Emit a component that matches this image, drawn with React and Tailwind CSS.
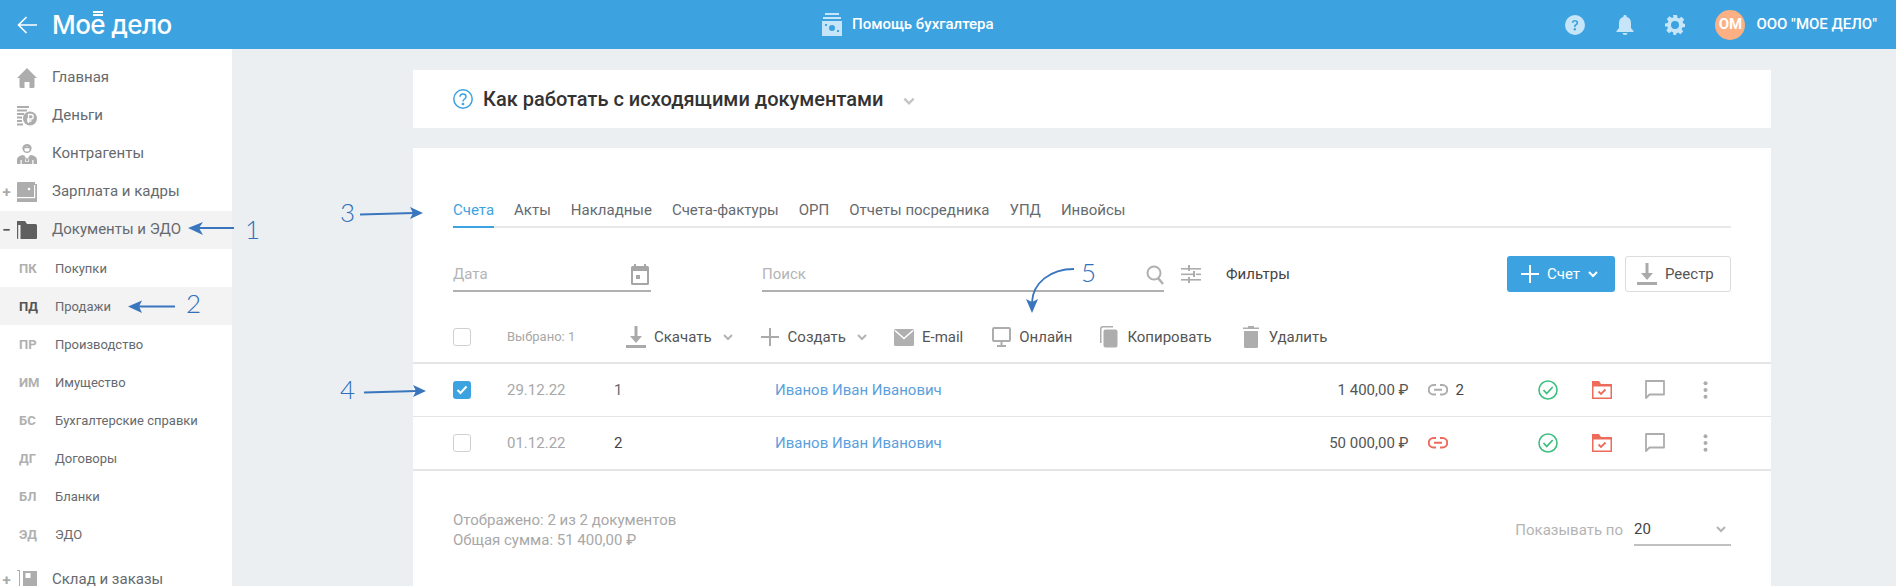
import React from "react";

const F = { fontFamily: "Roboto, 'Liberation Sans', sans-serif" };

const Chevron = ({ c = "#b4b4b4", s = 12 }) => (
  <svg width={s} height={s} viewBox="0 0 12 12" fill="none"><path d="M2 4l4 4 4-4" stroke={c} strokeWidth="2" /></svg>
);
const Plus = ({ c = "#aaa" }) => (
  <svg width="20" height="20" viewBox="0 0 20 20"><path d="M9 1h2v8h8v2h-8v8H9v-8H1V9h8z" fill={c} /></svg>
);
const Download = () => (
  <svg width="20" height="22" viewBox="0 0 20 22" fill="#aaa"><path d="M8.500 0h3v10H16l-6 7-6-7h4.500z" /><rect y="19" width="20" height="3" /></svg>
);

const Home = () => (
  <svg width="20" height="20" viewBox="0 0 20 20" fill="#adadad"><path d="M10 0L0 10h2.500v8.500A1.500 1.500 0 004 20h3.500v-6h5v6H16a1.500 1.500 0 001.500-1.500V10H20z" /></svg>
);
const Money = () => (
  <svg width="20" height="20" viewBox="0 0 20 20" fill="#adadad">
    <rect x="0" y="0" width="12" height="2" /><rect x="0" y="3.500" width="10" height="2" /><rect x="0" y="7" width="7" height="2" /><rect x="0" y="10.500" width="5" height="2" /><rect x="0" y="14" width="5" height="2" /><rect x="0" y="17.500" width="6" height="2" />
    <circle cx="13" cy="12.500" r="7" /><path d="M11.500 17V8.500h2.500a2 2 0 010 4.500h-4M10 15h4.500" stroke="#fff" strokeWidth="1.300" fill="none" />
  </svg>
);
const Person = () => (
  <svg width="20" height="20" viewBox="0 0 20 20" fill="#adadad">
    <circle cx="10" cy="4.500" r="4.500" /><circle cx="10" cy="5" r="2.600" fill="#fff" /><rect x="5.500" y="3" width="9" height="1.200" />
    <path d="M0 20v-4c0-3 3-4.500 6-5l3 1.500h2l3-1.500c3 .5 6 2 6 5v4z" /><path d="M7.500 12h5l-1.300 1.500.8 4.500H8l.8-4.500z" fill="#fff" /><path d="M9.300 14h1.400l.5 3.500H8.800z" />
    <rect x="3.500" y="16" width="1.200" height="4" fill="#fff" /><rect x="15.300" y="16" width="1.200" height="4" fill="#fff" />
  </svg>
);
const Wallet = () => (
  <svg width="20" height="20" viewBox="0 0 20 20" fill="#adadad">
    <path d="M1 0h17v2h2v18H0V1a1 1 0 011-1z" /><rect x="0" y="15" width="18" height="1.200" fill="#fff" /><rect x="17" y="3" width="1.200" height="13" fill="#fff" />
    <circle cx="12" cy="7" r="1.300" fill="#fff" />
  </svg>
);
const Folder = () => (
  <svg width="20" height="20" viewBox="0 0 20 20" fill="#5f5f5f">
    <path d="M0 1h8l2 3h8.500A1.500 1.500 0 0120 5.500V18a1 1 0 01-1 1H3.500V5H1.200v14A1 1 0 010 18z" />
  </svg>
);
const Store = () => (
  <svg width="20" height="20" viewBox="0 0 20 20" fill="#adadad">
    <path d="M0 0h3v20H1v-1h1V1H0z" /><path d="M6 1h14v18H6z" /><rect x="8.500" y="3" width="5" height="5" fill="#fff" />
  </svg>
);

const IconHelp = () => (
  <svg width="20" height="20" viewBox="0 0 20 20"><circle cx="10" cy="10" r="10" fill="#c6e5f9" /><path d="M6.800 7.800C6.800 5.900 8.300 5 10 5s3.200 1 3.200 2.700c0 2.400-2.600 2.300-2.600 4.300H9c0-3 2.400-2.800 2.400-4.300 0-.7-.6-1.200-1.400-1.200s-1.400.5-1.400 1.300z" fill="#3da3e0" /><circle cx="9.800" cy="14.300" r="1.200" fill="#3da3e0" /></svg>
);
const IconBell = () => (
  <svg width="18" height="20" viewBox="0 0 18 20" fill="#c6e5f9"><path d="M9 0a1.500 1.500 0 011.500 1.800C13.500 2.600 15 5 15 8v5l2.500 3v1H.5v-1L3 13V8c0-3 1.500-5.400 4.500-6.200A1.500 1.500 0 019 0z" /><path d="M6.500 18h5a2.500 2 0 01-5 0z" /></svg>
);
const IconGear = () => (
  <svg width="20" height="20" viewBox="0 0 20 20"><path fill="#c6e5f9" fillRule="evenodd" d="M8 0h4l.5 2.700 1.600.7 2.300-1.600 2.800 2.800-1.600 2.300.7 1.600L20 9v3l-2.700.5-.7 1.600 1.600 2.300-2.800 2.800-2.300-1.600-1.600.7L11 20H8.500l-.5-2.700-1.600-.7-2.300 1.600-2.800-2.800 1.600-2.300-.7-1.600L0 11.500V8.500l2.700-.5.700-1.600L1.800 4.100l2.800-2.800 2.300 1.600 1.600-.7zM10 6a4 4 0 100 8 4 4 0 000-8z" /></svg>
);
const IconCash = () => (
  <svg width="20" height="23" viewBox="0 0 20 23" fill="#c6e5f9"><rect x="3" y="0" width="14" height="2" /><rect x="1" y="4" width="18" height="2" /><path fillRule="evenodd" d="M0 8h20v15H0zM10 12a3 3 0 100 6 3 3 0 000-6zM3 11h2v2H3zM15 17h2v2h-2z" /></svg>
);

const Calendar = () => (
  <svg width="18" height="21" viewBox="0 0 18 21" fill="#a6a6a6"><path fillRule="evenodd" d="M3 0h2v2h8V0h2v2h1.500A1.500 1.500 0 0118 3.500v16a1.500 1.500 0 01-1.500 1.500h-15A1.500 1.500 0 010 19.500v-16A1.500 1.500 0 011.500 2H3zM2 7v12h14V7zM5 11h4v4H5z" /></svg>
);
const Search = () => (
  <svg width="18" height="20" viewBox="0 0 18 20" fill="none" stroke="#b0b0b0" strokeWidth="2"><circle cx="8" cy="8" r="6.500" /><path d="M12 13l5 6" strokeWidth="2.500" /></svg>
);
const Sliders = () => (
  <svg width="20" height="18" viewBox="0 0 20 18" fill="#adadad"><rect x="0" y="3" width="7" height="1.600" /><rect x="9" y="3" width="11" height="1.600" /><rect x="7" y="0" width="2" height="6" /><rect x="0" y="8.500" width="12" height="1.600" /><rect x="15" y="8.500" width="5" height="1.600" /><rect x="12" y="6" width="2" height="6" /><rect x="0" y="14" width="7" height="1.600" /><rect x="9" y="14" width="11" height="1.600" /><rect x="7" y="12" width="2" height="6" /></svg>
);
const Mail = () => (
  <svg width="20" height="17" viewBox="0 0 20 17"><rect width="20" height="17" rx="1.500" fill="#b0b0b0" /><path d="M1 1.500l9 8 9-8" stroke="#fff" strokeWidth="1.600" fill="none" /></svg>
);
const Monitor = () => (
  <svg width="19" height="20" viewBox="0 0 19 20" fill="none" stroke="#adadad" strokeWidth="2"><rect x="1" y="1" width="17" height="13" rx="1" /><path d="M9.500 14v4M5 19h9" /></svg>
);
const Copy = () => (
  <svg width="18" height="22" viewBox="0 0 18 22" fill="#adadad"><path d="M0 3a3 3 0 013-3h10v1.500H3A1.500 1.500 0 001.500 3v14H0z" /><rect x="3.500" y="3.500" width="14" height="18" rx="2" /></svg>
);
const Trash = () => (
  <svg width="16" height="22" viewBox="0 0 16 22" fill="#adadad"><path d="M5 0h6v1.500h5V3H0V1.500h5z" /><path d="M1 5h14v15.500a1.500 1.500 0 01-1.500 1.500h-11A1.500 1.500 0 011 20.500z" /></svg>
);
const LinkIcon = ({ c }) => (
  <svg width="20" height="12" viewBox="0 0 20 12" fill="none" stroke={c} strokeWidth="2"><path d="M8 1H5.500a4.500 4.500 0 000 9.500H8M12 1h2.500a4.500 4.500 0 010 9.500H12M6 5.800h8" /></svg>
);
const CheckCircle = () => (
  <svg width="20" height="20" viewBox="0 0 20 20" fill="none" stroke="#3dbf7f"><circle cx="10" cy="10" r="9" strokeWidth="1.600" /><path d="M5.500 10l3.200 3.500 6-6.500" strokeWidth="1.800" /></svg>
);
const FolderCheck = () => (
  <svg width="20" height="18" viewBox="0 0 20 18"><path fillRule="evenodd" fill="#ee6b5b" d="M0 0h7l2 3h11v15H0zM1.500 5.500v11h17v-11z" /><path d="M6.500 10.500l2.500 2.500 4.500-4.500" stroke="#ee6b5b" strokeWidth="1.800" fill="none" /></svg>
);
const Comment = () => (
  <svg width="20" height="20" viewBox="0 0 20 20" fill="none" stroke="#adadad" strokeWidth="1.800"><path d="M1 1h18v13.500H4.500L1 18z" strokeLinejoin="round" /></svg>
);
const Dots = () => (
  <svg width="5" height="18" viewBox="0 0 5 18" fill="#adadad"><circle cx="2.500" cy="2.200" r="2" /><circle cx="2.500" cy="9" r="2" /><circle cx="2.500" cy="15.800" r="2" /></svg>
);

const mainNav = [
  { t: "Главная", I: Home },
  { t: "Деньги", I: Money },
  { t: "Контрагенты", I: Person },
  { t: "Зарплата и кадры", I: Wallet, m: "+" },
  { t: "Документы и ЭДО", I: Folder, m: "−", active: true },
];
const subNav = [
  ["ПК", "Покупки"],
  ["ПД", "Продажи", true],
  ["ПР", "Производство"],
  ["ИМ", "Имущество"],
  ["БС", "Бухгалтерские справки"],
  ["ДГ", "Договоры"],
  ["БЛ", "Бланки"],
  ["ЭД", "ЭДО"],
];

function NavRow({ t, I, m, active }) {
  return (
    <div className={`relative flex h-[38px] items-center pl-[17px] ${active ? "bg-[#f3f3f4]" : ""}`}>
      {m && <span className={`absolute left-[1px] w-[11px] text-center text-[15px] font-bold ${active ? "text-[#555]" : "text-[#aaa]"}`}>{m}</span>}
      <I />
      <span className="ml-[15px] mb-[2px] text-[15px] text-[#666a6e]">{t}</span>
    </div>
  );
}

function Row({ checked, date, num, amount, linkColor, count, numClass }) {
  return (
    <div className="flex items-center px-10 text-[15px]">
      <span className={`flex h-[18px] w-[18px] items-center justify-center rounded-[3px] ${checked ? "bg-[#3da3e0]" : "border border-[#d0d0d0]"}`}>
        {checked && <svg width="12" height="10" viewBox="0 0 12 10" fill="none"><path d="M1.500 5l3 3 6-6.500" stroke="#fff" strokeWidth="2" /></svg>}
      </span>
      <span className="ml-[36px] w-[107px] text-[#a8a8a8]">{date}</span>
      <span className={`w-[161px] ${numClass}`}>{num}</span>
      <span className="text-[#5b9fdc]">Иванов Иван Иванович</span>
      <span className="ml-auto text-[#555]">{amount}</span>
      <span className="ml-[19px] flex w-[93px] items-center">
        <LinkIcon c={linkColor} />
        {count && <span className="ml-[8px] text-[#444]">{count}</span>}
      </span>
      <span className="flex w-[54px] justify-center"><CheckCircle /></span>
      <span className="flex w-[54px] justify-center"><FolderCheck /></span>
      <span className="flex w-[53px] justify-center"><Comment /></span>
      <span className="flex w-[47px] justify-center"><Dots /></span>
      <span className="w-[2.500px]" />
    </div>
  );
}

function Tool({ icon, label, chevron, className = "" }) {
  return (
    <div className={`flex items-center text-[15px] text-[#555] ${className}`}>
      <span className="flex w-[20px] justify-center">{icon}</span>
      <span className="ml-[8px]">{label}</span>
      {chevron && <span className="ml-[10px]"><Chevron /></span>}
    </div>
  );
}

const Num = ({ children, className }) => (
  <span className={`absolute text-[26px] leading-[26px] font-light text-[#2f6fbb] ${className}`} style={{ fontFamily: "Lato, sans-serif" }}>{children}</span>
);

export default function App() {
  const tabs = ["Акты", "Накладные", "Счета-фактуры", "ОРП", "Отчеты посредника", "УПД", "Инвойсы"];
  return (
    <div className="relative flex h-[586px] w-[1896px] flex-col overflow-hidden bg-[#ebeff2]" style={F}>
      <header className="flex h-[49px] shrink-0 items-center bg-[#3da3e0] text-white">
        <div className="flex w-[413px] items-center pl-[17px]">
          <svg width="20" height="18" viewBox="0 0 20 18" fill="none" stroke="#fff" strokeWidth="1.600"><path d="M20 9H2M9.500 1L1.500 9l8 8" /></svg>
          <span className="relative ml-[15px] text-[26px] leading-none font-medium tracking-[-0.6px]" style={{ fontFamily: "Inter, sans-serif" }}>
            Мое дело
            <span className="absolute left-[41px] top-[-1px] h-[2px] w-[10px] bg-white" />
            <span className="absolute left-[41px] top-[2px] h-[2px] w-[10px] bg-white" />
          </span>
        </div>
        <div className="ml-[409px] flex items-center">
          <IconCash />
          <span className="ml-[10px] text-[15px] font-medium">Помощь бухгалтера</span>
        </div>
        <div className="ml-auto flex items-center pr-[19px]">
          <IconHelp />
          <span className="ml-[31px] flex"><IconBell /></span>
          <span className="ml-[31px] flex"><IconGear /></span>
          <span className="ml-[30px] flex h-[30px] w-[30px] items-center justify-center rounded-full bg-[#fcb084] text-[15px] font-bold">ОМ</span>
          <span className="ml-[11px] text-[15px] font-medium">ООО "МОЕ ДЕЛО"</span>
        </div>
      </header>

      <div className="flex min-h-0 flex-1">
        <aside className="w-[232px] shrink-0 bg-white pt-[10px]">
          {mainNav.map((n) => <NavRow key={n.t} {...n} />)}
          {subNav.map(([a, t, on]) => (
            <div key={a} className={`flex h-[38px] items-center pl-[19px] text-[13px] ${on ? "bg-[#f3f3f4]" : ""}`}>
              <span className={`mt-[2px] w-[36px] font-bold ${on ? "text-[#555]" : "text-[#b0b0b0]"}`}>{a}</span>
              <span className="mt-[2px] text-[#666a6e]">{t}</span>
            </div>
          ))}
          <div className="mt-[8px]"><NavRow t="Склад и заказы" I={Store} m="+" /></div>
        </aside>

        <main className="ml-[181px] w-[1358px] pt-[21px]">
          <div className="flex h-[58px] items-center bg-white pl-[40px]">
            <svg width="20" height="20" viewBox="0 0 20 20" fill="none" stroke="#3da3e0" strokeWidth="1.500"><circle cx="10" cy="10" r="9.200" /><path d="M7 7.800C7 6 8.300 5 10 5s3 1 3 2.700c0 2.300-3 2.300-3 4.800" /><circle cx="10" cy="15" r=".6" fill="#3da3e0" /></svg>
            <h1 className="ml-[10px] text-[20px] leading-none font-medium text-[#333]">Как работать с исходящими документами</h1>
            <span className="ml-[18px] mt-[4px]"><Chevron c="#c4c4c4" s={14} /></span>
          </div>

          <section className="mt-[20px] h-[500px] bg-white pt-[50px]">
            <div className="mx-10 flex h-[30px] gap-[20px] border-b-2 border-[#e8e8e8] pt-[1px] text-[15px] text-[#666a6e]">
              <span className="-mb-[2px] border-b-2 border-[#3da3e0] text-[#3da3e0]">Счета</span>
              {tabs.map((t) => <span key={t}>{t}</span>)}
            </div>

            <div className="mx-10 mt-[28px] flex h-[36px] items-center">
              <div className="flex h-[36px] w-[198px] items-center justify-between border-b-2 border-[#b0b0b0] pt-[3px] pr-[2px] text-[15px] text-[#b4b4b4]">
                <span>Дата</span><Calendar />
              </div>
              <div className="ml-[111px] flex h-[36px] w-[402px] items-center justify-between border-b-2 border-[#b0b0b0] pt-[3px] text-[15px] text-[#b4b4b4]">
                <span>Поиск</span><Search />
              </div>
              <span className="ml-[17px]"><Sliders /></span>
              <span className="ml-[25px] text-[15px] text-[#444]">Фильтры</span>
              <button className="ml-auto flex h-[36px] w-[108px] items-center rounded-[3px] bg-[#3da3e0] pl-[13px] text-[15px] text-white">
                <Plus c="#fff" /><span className="ml-[7px]">Счет</span>
                <span className="ml-[7px]"><Chevron c="#fff" /></span>
              </button>
              <button className="ml-[10px] flex h-[36px] w-[106px] items-center rounded-[3px] border border-[#dcdcdc] pl-[11px] text-[15px] text-[#555]">
                <Download /><span className="ml-[8px]">Реестр</span>
              </button>
            </div>

            <div className="mt-[28px] flex h-[34px] items-center px-10">
              <span className="h-[18px] w-[18px] rounded-[3px] border border-[#d0d0d0]" />
              <span className="ml-[36px] w-[119px] text-[13px] text-[#a8a8a8]">Выбрано: 1</span>
              <Tool icon={<Download />} label="Скачать" chevron />
              <Tool icon={<Plus />} label="Создать" chevron className="ml-[26px]" />
              <Tool icon={<Mail />} label="E-mail" className="ml-[26px]" />
              <Tool icon={<Monitor />} label="Онлайн" className="ml-[28px]" />
              <Tool icon={<Copy />} label="Копировать" className="ml-[27px]" />
              <Tool icon={<Trash />} label="Удалить" className="ml-[29px]" />
            </div>

            <div className="mt-[8px] border-y-2 border-[#e5e5e5]">
              <div className="flex h-[53px] border-b border-[#e5e5e5]">
                <div className="w-full self-center"><Row checked date="29.12.22" num="1" amount="1 400,00 ₽" linkColor="#adadad" count="2" numClass="text-[#666a6e]" /></div>
              </div>
              <div className="flex h-[52px]">
                <div className="w-full self-center"><Row date="01.12.22" num="2" amount="50 000,00 ₽" linkColor="#ee6b5b" numClass="text-[#444]" /></div>
              </div>
            </div>

            <div className="flex items-center justify-between px-10 pt-[39px]">
              <div className="text-[15px] leading-[20px] text-[#a8a8a8]">
                <div>Отображено: 2 из 2 документов</div>
                <div>Общая сумма: 51 400,00 ₽</div>
              </div>
              <div className="flex items-center text-[15px]">
                <span className="text-[#b4b4b4]">Показывать по</span>
                <div className="ml-[11px] flex h-[32px] w-[97px] items-center justify-between border-b-2 border-[#c0c0c0] pr-[4px] text-[#444]">
                  <span>20</span><Chevron />
                </div>
              </div>
            </div>
          </section>
        </main>
      </div>

      <svg className="pointer-events-none absolute left-0 top-0" width="1896" height="586" viewBox="0 0 1896 586" fill="none">
        <g stroke="#3a76bd" strokeWidth="1.800">
          <path d="M234 228H198" />
          <path d="M175 306.500H138" />
          <path d="M360 214.500L414 213" />
          <path d="M364 392.500L417 391" />
          <path d="M1074 269C1050 269 1033 283 1032 302" />
        </g>
        <g fill="#3a76bd">
          <path d="M188 228l15-6-4 6 4 7z" />
          <path d="M128 306.500l14-6-3 6 3 6.500z" />
          <path d="M423 213l-13-6 3 6-3 6z" />
          <path d="M426 391l-13-6 3 6-3 6z" />
          <path d="M1032 313l-6-14 6 3 6-3z" />
        </g>
      </svg>
      <Num className="left-[245px] top-[216px]">1</Num>
      <Num className="left-[186px] top-[290px]">2</Num>
      <Num className="left-[340px] top-[199px]">3</Num>
      <Num className="left-[340px] top-[376px]">4</Num>
      <Num className="left-[1081px] top-[259px]">5</Num>
    </div>
  );
}
